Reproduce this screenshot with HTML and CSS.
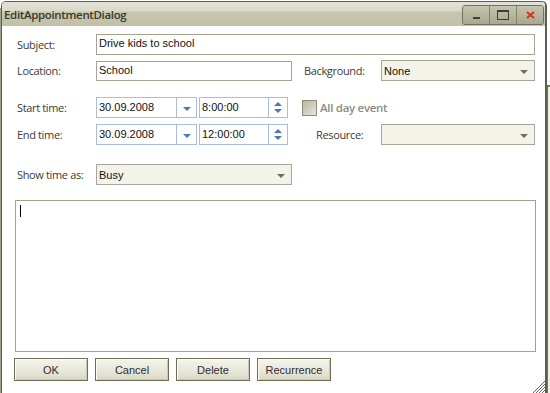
FILE: index.html
```html
<!DOCTYPE html>
<html lang="en">
<head>
    <meta charset="UTF-8">
    <title>EditAppointmentDialog</title>
    <link rel="stylesheet" href="styles.css">
</head>
<body>
    <div class="desktop">
        <div class="edge-left"></div>
        <div class="window">
            <div class="titlebar">
                <span class="title">EditAppointmentDialog</span>
                <div class="caption-buttons">
                    <div class="cap-btn"><span class="icon-min"></span></div>
                    <div class="cap-btn"><span class="icon-max"></span></div>
                    <div class="cap-btn">
                        <svg width="9" height="8" viewBox="0 0 9 8"><path d="M1 1 L8 7 M8 1 L1 7" stroke="#e0301a" stroke-width="2"/></svg>
                    </div>
                </div>
            </div>

            <div class="content">
                <div class="row row-subject">
                    <label class="label">Subject:</label>
                    <div class="textbox wide">Drive kids to school</div>
                </div>

                <div class="row row-location">
                    <label class="label">Location:</label>
                    <div class="textbox half">School</div>
                    <label class="label side-bg">Background:</label>
                    <div class="combo side-combo">
                        <span>None</span>
                        <span class="combo-arrow"></span>
                    </div>
                </div>

                <div class="row row-start">
                    <label class="label">Start time:</label>
                    <div class="date-edit">
                        <span class="date-text">30.09.2008</span>
                        <span class="date-btn"><span class="blue-arrow"></span></span>
                    </div>
                    <div class="time-edit">
                        <span class="date-text">8:00:00</span>
                        <span class="spin"><span class="spin-up"></span><span class="spin-down"></span></span>
                    </div>
                    <div class="allday">
                        <span class="checkbox"></span>
                        <span>All day event</span>
                    </div>
                </div>

                <div class="row row-end">
                    <label class="label">End time:</label>
                    <div class="date-edit">
                        <span class="date-text">30.09.2008</span>
                        <span class="date-btn"><span class="blue-arrow"></span></span>
                    </div>
                    <div class="time-edit">
                        <span class="date-text">12:00:00</span>
                        <span class="spin"><span class="spin-up"></span><span class="spin-down"></span></span>
                    </div>
                    <label class="label side-res">Resource:</label>
                    <div class="combo side-combo">
                        <span></span>
                        <span class="combo-arrow"></span>
                    </div>
                </div>

                <div class="row row-show">
                    <label class="label">Show time as:</label>
                    <div class="combo half">
                        <span>Busy</span>
                        <span class="combo-arrow"></span>
                    </div>
                </div>

                <div class="memo"><span class="caret"></span></div>

                <div class="buttons">
                    <button class="btn">OK</button>
                    <button class="btn">Cancel</button>
                    <button class="btn">Delete</button>
                    <button class="btn">Recurrence</button>
                </div>
            </div>

            <svg class="grip" width="13" height="13" viewBox="0 0 13 13">
                <path d="M13 1 L1 13 M13 4 L4 13 M13 7 L7 13 M13 10 L10 13" stroke="#6a6a60" stroke-width="1"/>
            </svg>
        </div>
        <div class="edge-right"><div class="green"></div></div>
    </div>
</body>
</html>
```

FILE: styles.css
```css
body {
    margin: 0;
    background-color: #ffffff;
    font-family: "Liberation Sans", Arial, sans-serif;
    overflow: hidden;
}
.desktop {
    display: flex;
    height: 393px;
}
.edge-left {
    width: 1px;
    margin-top: 8px;
    background-color: #9aa58a;
}
.edge-right {
    width: 3px;
    padding-top: 85px;
}
.edge-right .green {
    height: 100%;
    border-top: 2px solid #5c8a3a;
    border-left: 1px solid #6c7a5a;
    background-color: #eaf2dc;
}
.window {
    position: relative;
    width: 543px;
    border: 1px solid #5d5d50;
    border-right-width: 2px;
    border-bottom: none;
    border-radius: 5px 5px 0 0;
    background-color: #ffffff;
    margin-top: 1px;
}
.titlebar {
    display: flex;
    align-items: center;
    height: 24px;
    border-radius: 4px 4px 0 0;
    background: linear-gradient(#e3e2d6 0px, #dad9c9 9px, #c6c5ad 10px, #c2c1a8 24px);
    padding-left: 2px;
}
.title {
    font-family: "Open Sans", sans-serif;
    font-weight: 600;
    font-size: 11.5px;
    color: #3a3a32;
    letter-spacing: -0.35px;
}
.caption-buttons {
    display: flex;
    margin-left: auto;
    margin-right: 1px;
    margin-top: 1px;
    border: 1px solid #707060;
    border-radius: 3px;
    overflow: hidden;
}
.cap-btn {
    width: 26px;
    height: 18px;
    display: flex;
    align-items: center;
    justify-content: center;
    background: linear-gradient(#c4c3ae, #a9a890);
    border-left: 1px solid #83826c;
}
.cap-btn:first-child {
    border-left: none;
}
.icon-min {
    width: 7px;
    height: 2px;
    margin-top: 6px;
    background-color: #3f3f36;
}
.icon-max {
    width: 10px;
    height: 7px;
    border: 1px solid #3f3f36;
    border-top-width: 2px;
}
.content {
    padding: 8px 0 0 12px;
}
.row {
    display: flex;
    align-items: center;
}
.row-location { margin-top: 5px; }
.row-start { margin-top: 16px; }
.row-end { margin-top: 6px; }
.row-show { margin-top: 19px; }
.label {
    font-family: "Open Sans", sans-serif;
    font-size: 11px;
    color: #3c3c34;
    letter-spacing: -0.35px;
    width: 79px;
    padding-left: 3px;
}
.textbox {
    box-sizing: border-box;
    height: 20px;
    border: 1px solid #a4a490;
    background-color: #ffffff;
    font-size: 11px;
    line-height: 17px;
    padding-left: 2px;
    color: #111;
}
.wide { width: 439px; height: 21px; }
.half { width: 196px; }
.side-bg {
    width: 77px;
    margin-left: 12px;
    padding-left: 0;
}
.side-res {
    width: 65px;
    margin-left: 28px;
    padding-left: 0;
}
.combo {
    box-sizing: border-box;
    height: 21px;
    display: flex;
    align-items: center;
    justify-content: space-between;
    border: 1px solid #a8a898;
    background-color: #f4f3ea;
    font-size: 11px;
    padding-left: 2px;
    padding-right: 6px;
    color: #111;
}
.side-combo { width: 154px; }
.combo-arrow {
    width: 0;
    height: 0;
    border-left: 4px solid transparent;
    border-right: 4px solid transparent;
    border-top: 4px solid #6c6c66;
    margin-top: 2px;
}
.date-edit,
.time-edit {
    box-sizing: border-box;
    height: 21px;
    display: flex;
    border: 1px solid #a9bedc;
    background-color: #ffffff;
    font-size: 11px;
    color: #111;
}
.date-edit { width: 101px; }
.time-edit { width: 89px; margin-left: 2px; }
.date-text {
    flex: 1;
    line-height: 18px;
    padding-left: 2px;
}
.date-btn {
    width: 19px;
    display: flex;
    align-items: center;
    justify-content: center;
    border-left: 1px solid #a9bedc;
}
.blue-arrow {
    width: 0;
    height: 0;
    border-left: 4px solid transparent;
    border-right: 4px solid transparent;
    border-top: 4px solid #4d77b5;
    margin-top: 2px;
}
.spin {
    width: 18px;
    display: flex;
    flex-direction: column;
    align-items: center;
    justify-content: center;
    gap: 3px;
    border-left: 1px solid #a9bedc;
}
.spin-up {
    width: 0;
    height: 0;
    border-left: 4px solid transparent;
    border-right: 4px solid transparent;
    border-bottom: 4px solid #4d77b5;
}
.spin-down {
    width: 0;
    height: 0;
    border-left: 4px solid transparent;
    border-right: 4px solid transparent;
    border-top: 4px solid #4d77b5;
}
.allday {
    display: flex;
    align-items: center;
    gap: 3px;
    margin-left: 14px;
    font-family: "Open Sans", sans-serif;
    font-weight: 600;
    font-size: 11.5px;
    color: #8c8c84;
    letter-spacing: -0.3px;
}
.checkbox {
    box-sizing: border-box;
    width: 15px;
    height: 16px;
    border: 1px solid #8e8d78;
    background: linear-gradient(135deg, #b8b79f, #e6e5da);
}
.memo {
    box-sizing: border-box;
    width: 521px;
    height: 152px;
    margin-top: 15px;
    margin-left: 1px;
    border: 1px solid #a2a28e;
    padding: 4px 0 0 4px;
}
.caret {
    display: block;
    width: 1px;
    height: 12px;
    background-color: #000;
}
.buttons {
    display: flex;
    gap: 7px;
    margin-top: 6px;
}
.btn {
    box-sizing: border-box;
    width: 74px;
    height: 23px;
    border: 1px solid #6e6d55;
    box-shadow: inset 1px 1px 0 #fbfaf4, inset -1px -1px 0 #c9c8b4;
    background: linear-gradient(#f6f5ee, #e9e8dc 50%, #d9d8c6);
    font-family: "Liberation Sans", Arial, sans-serif;
    font-size: 11px;
    color: #2e2e2e;
    padding: 0;
}
.grip {
    position: absolute;
    right: 0;
    bottom: 0;
}
```
